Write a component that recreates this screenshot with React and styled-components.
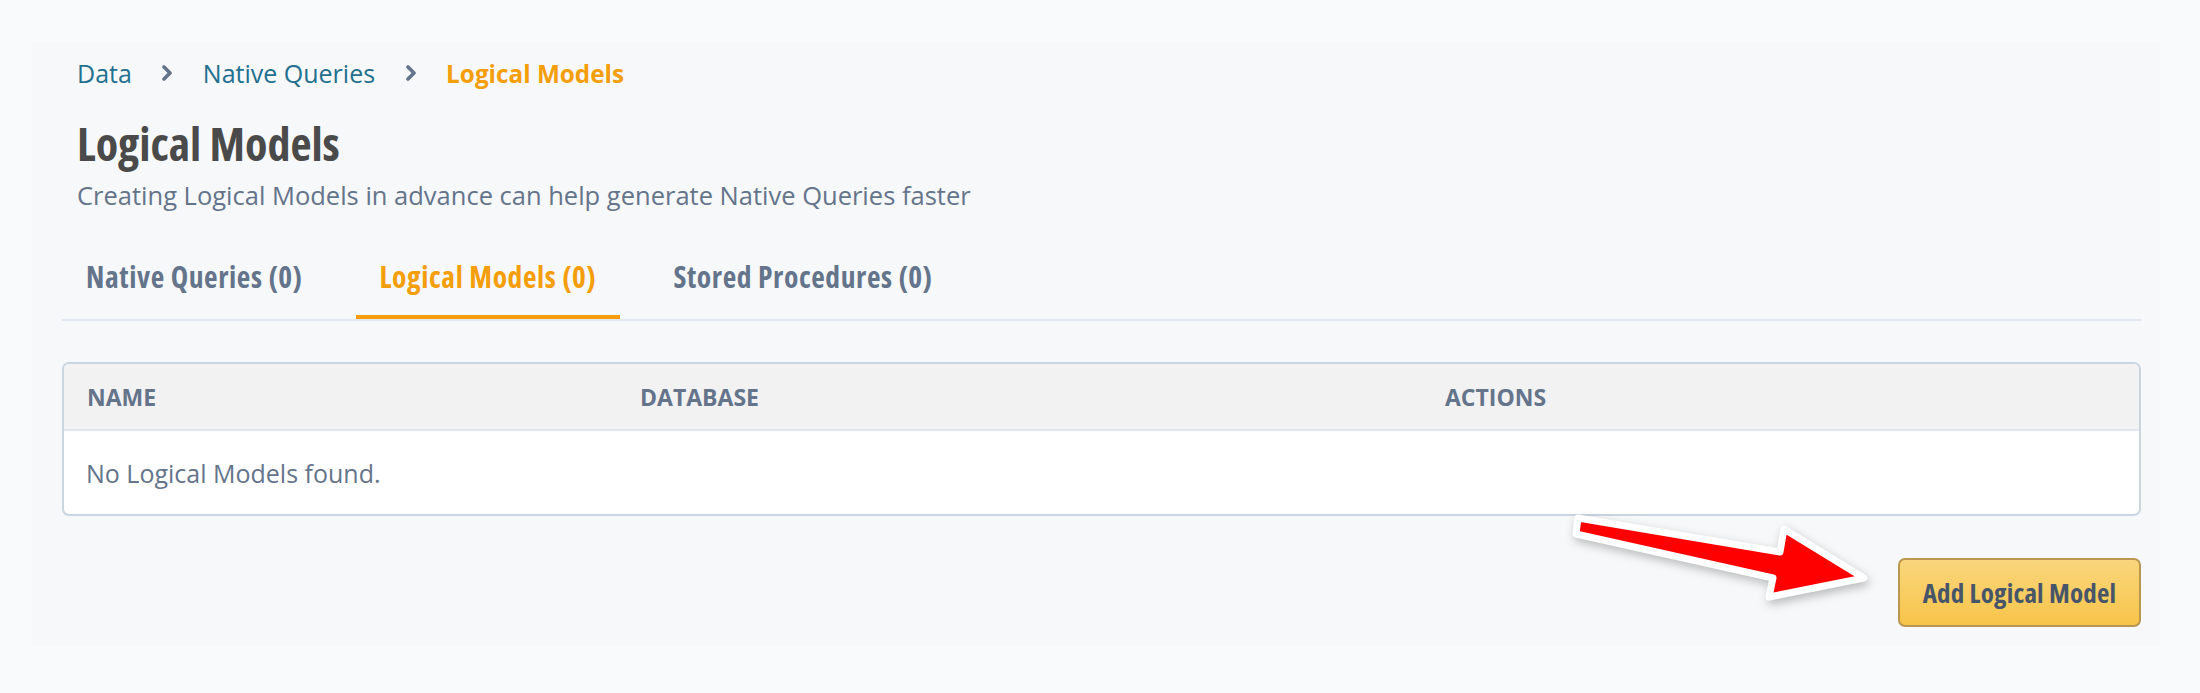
import styled, { createGlobalStyle } from 'styled-components'

const Global = createGlobalStyle`
  body {
    margin: 0;
    background: #f9fafb;
    font-family: "Open Sans", "Noto Sans", sans-serif;
  }
`

const Page = styled.div`
  padding: 43px 40px 48px 32px;
`

const Panel = styled.div`
  position: relative;
  background: #f6f8f9;
  padding: 10px 19px 18px 30px;
`

const Header = styled.div`
  padding-left: 15px;
`

const Crumbs = styled.nav`
  display: flex;
  align-items: center;
  gap: 29.5px;
  height: 40px;
`

const Crumb = styled.span`
  color: ${p => (p.active ? '#f59e0b' : '#23708f')};
  font-weight: ${p => (p.active ? 700 : 400)};
  font-size: ${p => (p.active ? '24.3px' : '25px')};
  font-stretch: ${p => (p.active ? '89%' : '90%')};
`

const Title = styled.h1`
  margin: 26px 0 0;
  font-size: 46px;
  line-height: 48px;
  font-weight: 700;
  font-stretch: 87.5%;
  color: #4a4a4a;
`

const Subtitle = styled.p`
  margin: 11px 0 0;
  font-size: 25.5px;
  line-height: 34px;
  font-stretch: 90%;
  color: #64748b;
`

const Tabs = styled.div`
  display: flex;
  gap: 29px;
  margin-top: 30px;
  border-bottom: 2px solid #e2e8f0;
`

const Tab = styled.div`
  padding: 18px 24px 21px;
  font-size: 29.5px;
  line-height: 34px;
  font-weight: 700;
  font-stretch: 75%;
  letter-spacing: 0.6px;
  color: ${p => (p.active ? '#f59e0b' : '#64748b')};
  border-bottom: 4px solid ${p => (p.active ? '#f59e0b' : 'transparent')};
`

const Table = styled.div`
  margin-top: 41px;
  border: 2px solid #cbd5e1;
  border-radius: 7px;
  overflow: hidden;
  background: #fff;
`

const HeadRow = styled.div`
  display: grid;
  grid-template-columns: 553px 805px 1fr;
  height: 65px;
  align-items: center;
  background: #f2f2f2;
  border-bottom: 2px solid #e2e8f0;
`

const HeadCell = styled.div`
  padding-left: 23px;
  font-size: 23px;
  font-weight: 700;
  text-transform: uppercase;
  color: #64748b;
`

const EmptyRow = styled.div`
  height: 83px;
  display: flex;
  align-items: center;
  padding-left: 22px;
  font-size: 25px;
  font-stretch: 90%;
  color: #64748b;
`

const Footer = styled.div`
  display: flex;
  justify-content: flex-end;
  margin-top: 42px;
`

const AddButton = styled.button`
  width: 243px;
  height: 69px;
  padding: 0;
  border: 2px solid #b9974e;
  border-radius: 7px;
  background: linear-gradient(#f9d67c, #f7c449);
  font-family: inherit;
  font-size: 27px;
  font-weight: 700;
  font-stretch: 75%;
  letter-spacing: 0.2px;
  color: #475569;
  cursor: pointer;
`

const Arrow = styled.svg`
  position: absolute;
  left: 1528px;
  top: 457px;
  overflow: visible;
  filter: drop-shadow(2px 4px 5px rgba(0, 0, 0, 0.25));
`

const Chevron = () => (
  <svg width="12" height="16" viewBox="0 0 12 16">
    <path d="M3 2l6 6-6 6" fill="none" stroke="#64748b" strokeWidth="3.6" strokeLinecap="round" strokeLinejoin="round" />
  </svg>
)

const columns = ['Name', 'Database', 'Actions']

export default function App() {
  return (
    <>
      <Global />
      <Page>
        <Panel>
          <Header>
            <Crumbs>
              <Crumb>Data</Crumb>
              <Chevron />
              <Crumb>Native Queries</Crumb>
              <Chevron />
              <Crumb active>Logical Models</Crumb>
            </Crumbs>
            <Title>Logical Models</Title>
            <Subtitle>Creating Logical Models in advance can help generate Native Queries faster</Subtitle>
          </Header>
          <Tabs>
            <Tab>Native Queries (0)</Tab>
            <Tab active>Logical Models (0)</Tab>
            <Tab>Stored Procedures (0)</Tab>
          </Tabs>
          <Table>
            <HeadRow>
              {columns.map(c => (
                <HeadCell key={c}>{c}</HeadCell>
              ))}
            </HeadRow>
            <EmptyRow>No Logical Models found.</EmptyRow>
          </Table>
          <Footer>
            <AddButton>Add Logical Model</AddButton>
          </Footer>
          <Arrow width="320" height="110" viewBox="0 0 320 110">
            <path
              d="M18 18 L220 52 L224 29 L304 78 L209 97 L213 78 L16 34 Z"
              fill="#ff0000"
              stroke="#fff"
              strokeWidth="7"
              strokeLinejoin="round"
            />
          </Arrow>
        </Panel>
      </Page>
    </>
  )
}
